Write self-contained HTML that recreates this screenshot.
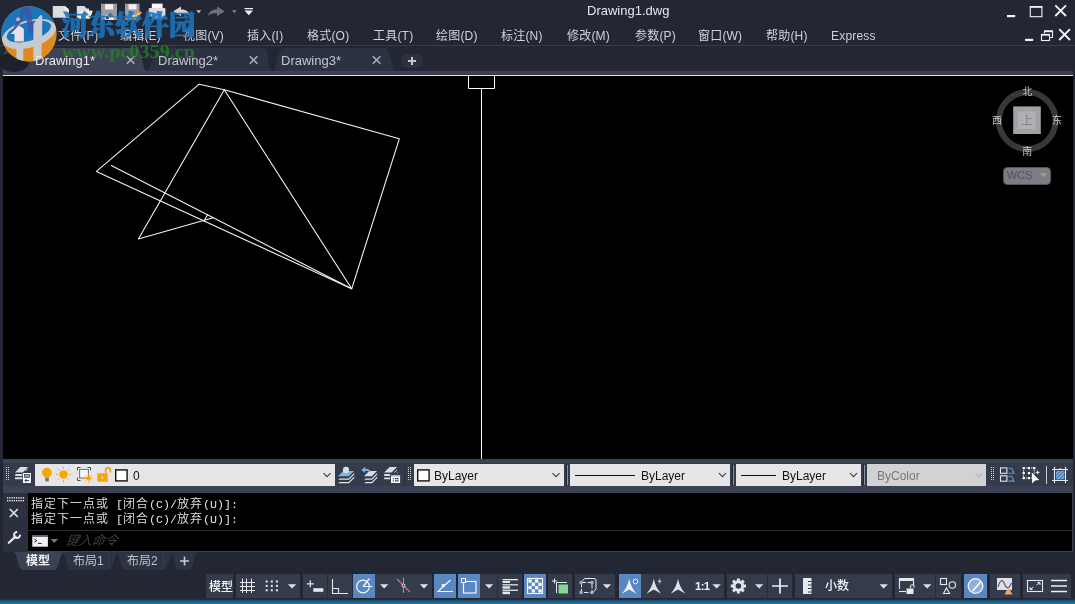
<!DOCTYPE html>
<html lang="zh-CN">
<head>
<meta charset="utf-8">
<title>Drawing1.dwg</title>
<style>
*{box-sizing:border-box;margin:0;padding:0}
html,body{width:1075px;height:604px;overflow:hidden;background:#222733}
body{position:relative;font-family:"Liberation Sans","Noto Sans CJK SC",sans-serif;font-size:12px;color:#d6d8dc}
#root{position:absolute;left:0;top:0;width:1075px;height:604px;will-change:transform}
.abs{position:absolute}
svg{position:absolute;overflow:visible}
/* title */
#title{left:587px;top:3px;font-size:13px;color:#e4e6ea;white-space:nowrap;line-height:16px}
.menu{top:28px;letter-spacing:.2px;font-size:12px;line-height:17px;color:#cfd2d8;white-space:nowrap}
#menusep{left:0;top:45px;width:1075px;height:1px;background:#363d4c}
.ftxt{z-index:5;top:53px;font-size:13px;line-height:16px;color:#c4c7ce;white-space:nowrap}
#bar1{left:3px;top:71px;width:1070px;height:4px;background:#3d4354;border-bottom:1px solid #30343f}
#wline{left:3px;top:75px;width:1070px;height:1px;background:#e4e4ec}
#canvas{left:3px;top:76px;width:1070px;height:383px;background:#000}
#bar2{left:3px;top:459px;width:1070px;height:34px;background:#3a4254}
#tb{left:3px;top:463px;width:1070px;height:23px;background:#343b4b}
.dd{top:464px;height:22px;background:#e6e6e8;color:#111;font-size:12px;line-height:22px;white-space:nowrap}
#cmdl{left:3px;top:493px;width:25px;height:59px;background:#2a303e}
#cmd{left:28px;top:493px;width:1045px;height:59px;background:#000;border-right:1px solid #3a4050;border-bottom:1px solid #3a4050}
#cmdsep{left:28px;top:530px;width:1045px;height:1px;background:#2a2e38}
.cl{left:31px;font-family:"Liberation Mono","Noto Sans CJK SC",monospace;font-size:12px;letter-spacing:1px;line-height:15px;color:#e4e4e4;white-space:pre;font-weight:350}
.cl .a{font-size:11.67px;letter-spacing:0}
.sb{top:574px;height:24px;background:#343b4b}
.sb.on{background:#5b87c0}
#blue{left:0;top:599px;width:1075px;height:5px;background:linear-gradient(#222733 0%,#1b5f88 45%,#1676ad 100%)}
</style>
</head>
<body>
<div id="root">
<!-- SECTION: title -->
<div class="abs" id="title">Drawing1.dwg</div>
<!-- SECTION: menu -->
<div class="abs menu" style="left:58px">文件(F)</div>
<div class="abs menu" style="left:120px">编辑(E)</div>
<div class="abs menu" style="left:183px">视图(V)</div>
<div class="abs menu" style="left:247px">插入(I)</div>
<div class="abs menu" style="left:307px">格式(O)</div>
<div class="abs menu" style="left:373px">工具(T)</div>
<div class="abs menu" style="left:436px">绘图(D)</div>
<div class="abs menu" style="left:501px">标注(N)</div>
<div class="abs menu" style="left:567px">修改(M)</div>
<div class="abs menu" style="left:635px">参数(P)</div>
<div class="abs menu" style="left:698px">窗口(W)</div>
<div class="abs menu" style="left:766px">帮助(H)</div>
<div class="abs menu" style="left:831px">Express</div>
<div class="abs" id="menusep"></div>
<!-- SECTION: filetabs -->
<svg width="1075" height="604" viewBox="0 0 1075 604" style="left:0;top:0">
<path d="M146.5 71 C152.5 71 152 48 159 48 H263 C270 48 267 71 273 71Z" fill="#2c3241"/>
<path d="M272 71 C278 71 277 48 284 48 H384 C391 48 391 71 397 71Z" fill="#2c3241"/>
<path d="M3 71 V58 Q3 48 13 48 H136 C143 48 141.500 71 147.500 71Z" fill="#3d4354"/>
<rect x="401" y="54" width="22" height="14" rx="6" fill="#2c3241"/>
</svg>
<div class="abs ftxt" style="left:35px;color:#e8eaee">Drawing1*</div>
<div class="abs ftxt" style="left:158px">Drawing2*</div>
<div class="abs ftxt" style="left:281px">Drawing3*</div>
<svg width="1075" height="604" viewBox="0 0 1075 604" style="left:0;top:0" fill="none">
<!-- quick access -->
<path d="M52.800 6 H64.700 L69 9.600 V17.700 H52.800Z" fill="#dcdde1"/>
<path d="M64.700 6 V9.600 H69Z" fill="#f4f4f6"/>
<path d="M76.800 18.600 V6 H84.300 L86.500 8.400 H89 V10.700 H92.600 L89.900 18.600Z" fill="#dcdde1"/>
<path d="M80 10.700 H92.600 L89.900 18.600 H76.800Z" fill="#eceef0"/>
<rect x="101" y="3.700" width="16" height="16.300" fill="#9b9ca3"/>
<rect x="105" y="4.200" width="8.200" height="5.200" fill="#f0f0f3"/>
<rect x="104.700" y="15.300" width="9" height="4.700" fill="#f0f0f3"/>
<rect x="106" y="16.600" width="2.600" height="2.600" fill="#2a3142"/>
<rect x="125" y="3.700" width="14.500" height="16.300" fill="#9b9ca3"/>
<rect x="128.500" y="4.200" width="8" height="5.200" fill="#f0f0f3"/>
<rect x="128.500" y="15.300" width="8" height="4.700" fill="#f0f0f3"/>
<path d="M139.800 11 L141.800 13 L134.500 20 L132 20.500 L132.600 18Z" fill="#f2c24e"/>
<path d="M139.800 11 L141.800 13 L140.600 14.200 L138.600 12.200Z" fill="#e87a7a"/>
<rect x="151.800" y="3.600" width="10.800" height="6" fill="#fafafc"/>
<rect x="148.700" y="8" width="16.700" height="8.500" rx="1" fill="#dcdde1"/>
<rect x="151.800" y="13.500" width="10.800" height="5.800" fill="#9fd0f5"/>
<path d="M173.200 11.300 L181 6.400 V9.400 C186 9.200 189 11.500 190 15.800 C187.600 13.600 185 13 181 13.200 V16.200Z" fill="#d4d6dc"/>
<path d="M196.200 10.300 H201.200 L198.700 13.200Z" fill="#c8cad0"/>
<path d="M224.800 11.300 L217 6.400 V9.400 C212 9.200 209 11.500 208 15.800 C210.400 13.600 213 13 217 13.200 V16.200Z" fill="#6b7080"/>
<path d="M231.800 10.300 H236.800 L234.300 13.200Z" fill="#7a7f8c"/>
<path d="M244.600 7.900 H253 V9.200 H244.600Z M244.600 10.500 H253 L248.800 15.200Z" fill="#f0f1f4"/>
<!-- window controls -->
<g fill="#f2f3f6">
<rect x="1007" y="15" width="8.200" height="2.200"/>
<rect x="1025" y="38.800" width="8.200" height="2.200"/>
</g>
<rect x="1030.300" y="7" width="11.600" height="9.700" stroke="#f2f3f6" stroke-width="1.100"/>
<rect x="1029.800" y="6" width="12.600" height="1.600" fill="#f2f3f6"/>
<path d="M1055.300 5.300 L1066 16 M1066 5.300 L1055.300 16" stroke="#f2f3f6" stroke-width="1.900"/>
<path d="M1059.200 29.200 L1070 40 M1070 29.200 L1059.200 40" stroke="#f2f3f6" stroke-width="1.900"/>
<path d="M1044.500 33.500 V31 H1052.500 V37.500 H1050" stroke="#f2f3f6" stroke-width="1.100"/>
<path d="M1044 31.300 H1053" stroke="#f2f3f6" stroke-width="1.700"/>
<rect x="1041.500" y="34.500" width="8" height="6" stroke="#f2f3f6" stroke-width="1.100"/>
<path d="M1041 34.800 H1050" stroke="#f2f3f6" stroke-width="1.700"/>
<!-- tab close / plus -->
<g stroke="#a9adb7" stroke-width="1.600">
<path d="M126.800 56.200 L134.400 63.800 M134.400 56.200 L126.800 63.800"/>
<path d="M249.800 56.200 L257.400 63.800 M257.400 56.200 L249.800 63.800"/>
<path d="M372.800 56.200 L380.400 63.800 M380.400 56.200 L372.800 63.800"/>
<path d="M412 57 V65 M408 61 H416" stroke-width="2" stroke="#c6c8ce"/>
</g>
</svg>
<div class="abs" id="bar1"></div>
<div class="abs" id="wline"></div>
<!-- SECTION: canvas -->
<div class="abs" id="canvas"></div>
<svg width="1075" height="604" viewBox="0 0 1075 604" style="left:0;top:0" fill="none" stroke="#f2f2f2" stroke-width="1.1" stroke-linecap="round" stroke-linejoin="round">
<path d="M199.2 84.2 L224.3 89.8 L399.3 138.8 L351.7 288.8 L96.4 171.4 Z"/>
<path d="M111.3 165.5 L351.7 288.8 L224.3 89.8 L138.4 239 L213.1 217.7"/>
<path d="M204 221 L207.6 214.7"/>
<path d="M468.5 76 V88.5 H494.5 V76" stroke="#fff" stroke-width="1"/>
<path d="M481.5 88.5 V459" stroke="#fff" stroke-width="1" stroke-linecap="butt"/>
</svg>
<!-- viewcube -->
<svg width="1075" height="604" viewBox="0 0 1075 604" style="left:0;top:0">
<circle cx="1027.2" cy="120.6" r="28.3" fill="none" stroke="#38383a" stroke-width="6"/>
<rect x="1013.2" y="106.4" width="27.6" height="27.6" fill="#a2a2a6"/>
<rect x="1018" y="111.5" width="17.5" height="17.5" fill="#b0b0b4"/>
<rect x="1003.5" y="167.5" width="47" height="17" rx="4" fill="#7c7c82" stroke="#55555a" stroke-width="1"/>
<path d="M1040 173 h7 l-3.5 4.5z" fill="#9a9aa0"/>
<g font-family="'Liberation Sans','Noto Sans CJK SC',sans-serif" text-anchor="middle">
<text x="1027.2" y="94.5" font-size="10" fill="#c8c8c8">北</text>
<text x="1027.2" y="154.5" font-size="10" fill="#c8c8c8">南</text>
<text x="997" y="123.7" font-size="10" fill="#c8c8c8">西</text>
<text x="1057" y="123.7" font-size="10" fill="#c8c8c8">东</text>
<text x="1027.2" y="124.8" font-size="12" fill="#66666c" font-weight="300">上</text>
<text x="1019.5" y="178.8" font-size="11" fill="#505056">WCS</text>
</g>
</svg>
<!-- SECTION: toolbar -->
<div class="abs" id="bar2"></div>
<div class="abs" id="tb"></div>
<div class="abs dd" style="left:35px;width:300px"><span class="abs" style="left:98px;top:1px">0</span></div>
<div class="abs dd" style="left:414px;width:150px"><span class="abs" style="left:20px;top:1px">ByLayer</span></div>
<div class="abs dd" style="left:570px;width:160px"><span class="abs" style="left:71px;top:1px">ByLayer</span></div>
<div class="abs dd" style="left:736px;width:125px"><span class="abs" style="left:46px;top:1px">ByLayer</span></div>
<div class="abs dd" style="left:867px;width:119px;background:#d2d2d5;color:#77777a"><span class="abs" style="left:10px;top:1px">ByColor</span></div>
<svg width="1075" height="604" viewBox="0 0 1075 604" style="left:0;top:0" fill="none">
<!-- toolbar decorations -->
<g stroke="#444448" stroke-width="1.150">
<path d="M323.500 473.200 l3.500 3.500 l3.500 -3.500"/><path d="M552.500 473.200 l3.500 3.500 l3.500 -3.500"/><path d="M719 473.200 l3.500 3.500 l3.500 -3.500"/><path d="M850 473.200 l3.500 3.500 l3.500 -3.500"/>
</g>
<path d="M975.500 473.200 l3.500 3.500 l3.500 -3.500" stroke="#b4b4b8" stroke-width="1.150"/>
<g stroke="#111" stroke-width="1">
<path d="M575 475.5 H635"/><path d="M741 475.5 H776"/>
</g>
<rect x="115.7" y="469.9" width="11.4" height="11" fill="#fff" stroke="#111" stroke-width="1.4"/>
<rect x="417.7" y="469.9" width="11.4" height="11" fill="#fff" stroke="#111" stroke-width="1.4"/>
<!-- separators -->
<g stroke="#8b92a3" stroke-width="1">
<path d="M404.5 464 V486" stroke="#2a303e"/>
<path d="M567.5 465 V485"/><path d="M733.5 465 V485"/><path d="M864.5 465 V485"/>
<path d="M1046.5 466 V484" stroke="#c8ccd4"/>
</g>
<g stroke="#222733" stroke-width="1"><path d="M566.5 465 V485"/><path d="M732.5 465 V485"/><path d="M863.5 465 V485"/></g>
</svg>
<!-- toolbar icons -->
<svg width="1075" height="604" viewBox="0 0 1075 604" style="left:0;top:0" fill="none">
<g fill="#cfd3db"><rect x="6" y="467" width="1" height="1"/><rect x="6" y="469" width="1" height="1"/><rect x="6" y="471" width="1" height="1"/><rect x="6" y="473" width="1" height="1"/><rect x="6" y="475" width="1" height="1"/><rect x="6" y="477" width="1" height="1"/><rect x="6" y="479" width="1" height="1"/><rect x="8" y="467" width="1" height="1"/><rect x="8" y="469" width="1" height="1"/><rect x="8" y="471" width="1" height="1"/><rect x="8" y="473" width="1" height="1"/><rect x="8" y="475" width="1" height="1"/><rect x="8" y="477" width="1" height="1"/><rect x="8" y="479" width="1" height="1"/><rect x="408" y="467" width="1" height="1"/><rect x="408" y="469" width="1" height="1"/><rect x="408" y="471" width="1" height="1"/><rect x="408" y="473" width="1" height="1"/><rect x="408" y="475" width="1" height="1"/><rect x="408" y="477" width="1" height="1"/><rect x="408" y="479" width="1" height="1"/><rect x="410" y="467" width="1" height="1"/><rect x="410" y="469" width="1" height="1"/><rect x="410" y="471" width="1" height="1"/><rect x="410" y="473" width="1" height="1"/><rect x="410" y="475" width="1" height="1"/><rect x="410" y="477" width="1" height="1"/><rect x="410" y="479" width="1" height="1"/><rect x="991" y="467" width="1" height="1"/><rect x="991" y="469" width="1" height="1"/><rect x="991" y="471" width="1" height="1"/><rect x="991" y="473" width="1" height="1"/><rect x="991" y="475" width="1" height="1"/><rect x="991" y="477" width="1" height="1"/><rect x="991" y="479" width="1" height="1"/><rect x="993" y="467" width="1" height="1"/><rect x="993" y="469" width="1" height="1"/><rect x="993" y="471" width="1" height="1"/><rect x="993" y="473" width="1" height="1"/><rect x="993" y="475" width="1" height="1"/><rect x="993" y="477" width="1" height="1"/><rect x="993" y="479" width="1" height="1"/></g>
<!-- layer props icon -->
<g fill="#dcdde2">
<path d="M15 472.6 L20.2 467.1 H28 L22.8 472.6Z"/>
<path d="M15.3 474 H22.3 V476 H15.3Z M15 477.3 H22.3 V479.3 H15Z"/>
<path d="M25.5 470.8 l2.2-2.2" stroke="#dcdde2" stroke-width="1"/>
</g>
<rect x="22.9" y="473" width="8" height="10" fill="#fff"/>
<rect x="24.3" y="474.4" width="5.3" height="3" fill="#7fa3cf" stroke="#2f3b50" stroke-width=".7"/>
<path d="M25 480.6 H29 M26.6 479 L25 480.6 L26.6 482.2" stroke="#2f3b50" stroke-width="1"/>
<!-- bulb -->
<circle cx="46.9" cy="472.6" r="4.9" fill="#f5a700"/>
<rect x="45.2" y="477.3" width="3.6" height="4.2" rx="1" fill="#77777c"/>
<path d="M44 476 h5.8 l-1 2 h-3.8z" fill="#f5a700"/>
<!-- sun -->
<circle cx="63.5" cy="474.5" r="4.2" fill="#f5a700"/>
<g stroke="#f0a81a" stroke-width="1">
<path d="M63.5 466.8 v2 M63.5 480.2 v2 M55.8 474.5 h2 M69.2 474.5 h2 M58.1 469.1 l1.4 1.4 M67.5 478.5 l1.4 1.4 M68.9 469.1 l-1.4 1.4 M59.5 478.5 l-1.4 1.4"/>
</g>
<!-- frame/viewport freeze -->
<rect x="79.6" y="469.4" width="8.8" height="8.6" fill="#f6f6fa" stroke="#6a6d78" stroke-width="1"/>
<path d="M77.5 470.5 V467.5 H80.5 M87.5 467.5 H90.5 V470.5 M77.5 477.5 V480.5 H80.5" stroke="#4a4d58" stroke-width="1"/>
<circle cx="88.6" cy="478.3" r="2.4" fill="#f5a700"/>
<g stroke="#f0a81a" stroke-width=".9"><path d="M88.6 473.8 v1.2 M88.6 481.6 v1.2 M84.1 478.3 h1.2 M91.9 478.3 h1.2 M85.4 475.1 l.9 .9 M90.9 480.6 l.9 .9 M91.8 475.1 l-.9 .9 M86.3 480.6 l-.9 .9"/></g>
<!-- lock -->
<rect x="97.3" y="473.3" width="10.4" height="8.4" fill="#f5a700"/>
<path d="M105.6 473.3 V470.5 a2.4 2.6 0 0 1 4.8 0 V472.4" stroke="#e9a21a" stroke-width="1.6"/>
<rect x="101.9" y="476" width="1" height="3" fill="#ffe9a8"/>
<!-- layer icons after dd1 -->
<path d="M338 476.2 L343.2 471 H354 L348.8 476.2Z" fill="#7db5e4"/>
<circle cx="346" cy="469.9" r="3.1" fill="#dcdde2"/>
<path d="M338.3 479.8 H349 L354.3 474.5 V473 L348.6 478.5 H339.6Z M338.3 483.2 H349 L354.3 477.9 V476.4 L348.6 481.9 H339.6Z" fill="#e4e5ea"/>
<path d="M364 476.2 L369.2 471 H377 L371.8 476.2Z" fill="#dcdde2"/>
<path d="M364.3 479.8 H372 L377.3 474.5 V473 L371.6 478.5 H365.6Z M364.3 483.2 H372 L377.3 477.9 V476.4 L371.6 481.9 H365.6Z" fill="#e4e5ea"/>
<path d="M361.3 469.9 L365.2 466.8 V468.8 C368 468.6 370 469.6 371 472 C369.6 470.9 367.6 470.8 365.2 471 V473Z" fill="#6fb0e6"/>
<path d="M384.1 472.5 L389.7 466.9 H397.1 L391.5 472.5Z" fill="#dcdde2"/>
<path d="M384.2 474 H390.2 V476 H384.2Z M384.2 477.4 H390.2 V479.3 H384.2Z" fill="#dcdde2"/>
<path d="M394.3 472.6 l2.6-2.6 M397.2 473.2 l.6-.6" stroke="#dcdde2" stroke-width="1"/>
<rect x="391" y="475" width="9.1" height="8" fill="#fff"/>
<rect x="391" y="475" width="9.1" height="1.7" fill="#b4b5bd"/>
<path d="M392.8 478.6 h1.2 M395 478.6 h3.6 M392.8 480.9 h1.2 M395 480.9 h3.6" stroke="#3a4254" stroke-width="1.1"/>
<!-- right icons -->
<g stroke="#e4e6ec" stroke-width="1.1">
<rect x="1000.5" y="467.9" width="6.4" height="5.4"/><rect x="1000.5" y="475.8" width="6.4" height="5.4"/>
</g>
<path d="M1008.5 468.3 H1011.6 L1014 473.2 H1008.5 M1008.5 476.2 H1011.6 L1014 481.1 H1008.5" stroke="#5b9bd5" stroke-width="1.1"/>
<rect x="1023.6" y="468" width="10.6" height="10" stroke="#e8eaee" stroke-width="1" stroke-dasharray="1.5 1"/>
<g fill="#fff"><rect x="1022.6" y="467" width="2.2" height="2.2"/><rect x="1027.9" y="467" width="2.2" height="2.2"/><rect x="1033.2" y="467" width="2.2" height="2.2"/><rect x="1022.6" y="472" width="2.2" height="2.2"/><rect x="1027.9" y="472" width="2.2" height="2.2"/><rect x="1022.6" y="477" width="2.2" height="2.2"/><rect x="1027.9" y="477" width="2.2" height="2.2"/>
<path d="M1031.8 472.6 L1039.2 480 L1035 480.6 L1032.2 483.4Z"/>
<path d="M1037.6 470.6 v3.6 M1035.8 472.4 h3.6" stroke="#fff" stroke-width="1"/></g>
<path d="M1054.5 466.8 V483.2 M1065.5 466.8 V483.2 M1052 469.5 H1068 M1052 480.5 H1068" stroke="#e4e6ec" stroke-width="1.1"/>
<rect x="1056" y="470.8" width="8.4" height="8.6" fill="#4f86c0"/>
<path d="M1056 474 l3.2-3.2 M1056 477.6 l6.8-6.8 M1057.6 479.4 l6.8-6.8 M1061.2 479.4 l3.2-3.2" stroke="#a8cdf0" stroke-width=".9"/>
<path d="M1057.6 469.6 q2.6-2 5.2 0z" fill="#fff"/>
</svg>
<!-- SECTION: cmd -->
<div class="abs" id="cmdl"></div>
<div class="abs" id="cmd"></div>
<div class="abs" id="cmdsep"></div>
<div class="abs cl" style="top:498px">指定下一点或<span class="a"> [</span>闭合<span class="a">(C)/</span>放弃<span class="a">(U)]:</span></div>
<div class="abs cl" style="top:513px">指定下一点或<span class="a"> [</span>闭合<span class="a">(C)/</span>放弃<span class="a">(U)]:</span></div>
<div class="abs" style="left:66px;top:532px;font-size:13px;line-height:17px;color:#3e3e40;font-style:italic;white-space:nowrap;transform:skewX(-10deg)">键入命令</div>
<svg width="1075" height="604" viewBox="0 0 1075 604" style="left:0;top:0" fill="none">
<g fill="#eceef2"><rect x="7.00" y="497.2" width="1.300" height="1.400"/><rect x="9.25" y="497.2" width="1.300" height="1.400"/><rect x="11.50" y="497.2" width="1.300" height="1.400"/><rect x="13.75" y="497.2" width="1.300" height="1.400"/><rect x="16.00" y="497.2" width="1.300" height="1.400"/><rect x="18.25" y="497.2" width="1.300" height="1.400"/><rect x="20.50" y="497.2" width="1.300" height="1.400"/><rect x="22.75" y="497.2" width="1.300" height="1.400"/><rect x="7.00" y="500" width="1.300" height="1.400"/><rect x="9.25" y="500" width="1.300" height="1.400"/><rect x="11.50" y="500" width="1.300" height="1.400"/><rect x="13.75" y="500" width="1.300" height="1.400"/><rect x="16.00" y="500" width="1.300" height="1.400"/><rect x="18.25" y="500" width="1.300" height="1.400"/><rect x="20.50" y="500" width="1.300" height="1.400"/><rect x="22.75" y="500" width="1.300" height="1.400"/></g>
<path d="M9.8 509 L17.8 517 M17.8 509 L9.8 517" stroke="#e2e4ea" stroke-width="1.7"/>
<path d="M8.8 542.8 L15.4 536.6" stroke="#e8eaee" stroke-width="2.2" stroke-linecap="round"/>
<path d="M20 534.7 A3 3 0 1 1 17.3 532" stroke="#e8eaee" stroke-width="2" fill="none"/>
<rect x="32.3" y="535.2" width="15.6" height="11.5" fill="#f2f2f4"/>
<rect x="32.3" y="535.2" width="15.6" height="1.6" fill="#4a4a4e"/>
<path d="M34.4 539 l2.4 1.6 l-2.4 1.6 M38 543.4 h3.6" stroke="#222" stroke-width="1"/>
<path d="M50.6 539 h7.4 l-3.7 4z" fill="#77777a"/>
</svg>
<!-- SECTION: layouttabs -->
<svg width="1075" height="604" viewBox="0 0 1075 604" style="left:0;top:0">
<path d="M62 552 C66 552 66 570 71 570 H109 C114 570 114 552 119 552Z" fill="#2d3342"/>
<path d="M116 552 C120 552 120 570 125 570 H164 C169 570 169 552 174 552Z" fill="#2d3342"/>
<path d="M170 552 C174 552 174 570 179 570 H189 C194 570 194 552 198 552Z" fill="#2d3342"/>
<path d="M13 552 C18 552 17 570 23 570 H54 C60 570 59 552 64.500 552Z" fill="#3a4254"/>
<path d="M108.5 553 V567 M163.500 553 V567" stroke="#39404f" stroke-width="1"/>
<path d="M184.500 556.500 V565.500 M180 561 H189" stroke="#c6c9d0" stroke-width="1.6"/>
</svg>
<div class="abs" style="left:26px;top:553px;font-size:12px;line-height:17px;font-weight:bold;color:#f2f3f6;white-space:nowrap">模型</div>
<div class="abs" style="left:73px;top:553px;font-size:12px;line-height:17px;color:#bfc3cb;white-space:nowrap">布局1</div>
<div class="abs" style="left:127px;top:553px;font-size:12px;line-height:17px;color:#bfc3cb;white-space:nowrap">布局2</div>
<!-- SECTION: status -->
<div class="abs sb" style="left:206px;width:27px"></div>
<div class="abs sb" style="left:236px;width:64px"></div>
<div class="abs sb" style="left:303px;width:49px"></div>
<div class="abs sb on" style="left:353px;width:22px"></div>
<div class="abs sb" style="left:375px;width:57px"></div>
<div class="abs sb on" style="left:434px;width:22px"></div>
<div class="abs sb on" style="left:458px;width:22px"></div>
<div class="abs sb" style="left:480px;width:42px"></div>
<div class="abs sb on" style="left:524px;width:22px"></div>
<div class="abs sb" style="left:548px;width:24px"></div>
<div class="abs sb" style="left:575px;width:40px"></div>
<div class="abs sb on" style="left:619px;width:22px"></div>
<div class="abs sb" style="left:641px;width:83px"></div>
<div class="abs sb" style="left:727px;width:65px"></div>
<div class="abs sb" style="left:795px;width:97px"></div>
<div class="abs sb" style="left:895px;width:66px"></div>
<div class="abs sb on" style="left:964px;width:23px"></div>
<div class="abs sb" style="left:990px;width:30px"></div>
<div class="abs sb" style="left:1023px;width:48px"></div>
<div class="abs" style="left:209px;top:579px;font-size:12px;line-height:17px;color:#f4f5f8;white-space:nowrap;font-weight:500">模型</div>
<div class="abs" style="left:825px;top:578px;font-size:12px;line-height:17px;color:#f4f5f8;white-space:nowrap;font-weight:500">小数</div>
<div class="abs" style="left:695px;top:578px;line-height:17px;color:#eceef2;white-space:nowrap;letter-spacing:-.7px;font-weight:bold;font-size:11.5px">1:1</div>
<svg width="1075" height="604" viewBox="0 0 1075 604" style="left:0;top:0" fill="none">
<g fill="#dfe1e6"><path d="M287.9 584.2 h8.4 l-4.2 4.2z"/><path d="M380 584.2 h8.4 l-4.2 4.2z"/><path d="M419.8 584.2 h8.4 l-4.2 4.2z"/><path d="M484.9 584.2 h8.4 l-4.2 4.2z"/><path d="M602.8 584.2 h8.4 l-4.2 4.2z"/><path d="M712.4 584.2 h8.4 l-4.2 4.2z"/><path d="M755 584.2 h8.4 l-4.2 4.2z"/><path d="M879.5 584.2 h8.4 l-4.2 4.2z"/><path d="M923 584.2 h8.4 l-4.2 4.2z"/></g>
<!-- separators inside groups -->
<path d="M327.500 574 V598 M497.500 574 V598 M767.500 574 V598 M935.500 574 V598" stroke="#262b37" stroke-width="1"/>
<!-- grid -->
<path d="M242.500 578.500 V593 M246.500 578.500 V593 M251.500 578.500 V593 M240 582.500 H255 M240 586.500 H255 M240 590.500 H255" stroke="#e6e8ec" stroke-width="1"/>
<!-- snap dots -->
<g fill="#e6e8ec"><rect x="265.7" y="580.5" width="2" height="2"/><rect x="265.7" y="584.9" width="2" height="2"/><rect x="265.7" y="589.3" width="2" height="2"/><rect x="270.8" y="580.5" width="2" height="2"/><rect x="270.8" y="584.9" width="2" height="2"/><rect x="270.8" y="589.3" width="2" height="2"/><rect x="275.9" y="580.5" width="2" height="2"/><rect x="275.9" y="584.9" width="2" height="2"/><rect x="275.9" y="589.3" width="2" height="2"/></g>
<!-- dyn input -->
<path d="M310.300 580.300 V587.300 M306.800 583.800 H313.800" stroke="#e6e8ec" stroke-width="1.2"/>
<rect x="313.300" y="588.200" width="10" height="3.600" fill="#e6e8ec"/>
<!-- ortho -->
<path d="M332.500 579 V593.500 H348 M332.500 588.500 H338.500 V593.500" stroke="#e6e8ec" stroke-width="1.1"/>
<!-- polar -->
<circle cx="363" cy="586.500" r="6.300" stroke="#f4f6fa" stroke-width="1.200"/>
<path d="M363 586.500 H372.500 M363 586.500 L369.500 578.500" stroke="#f4f6fa" stroke-width="1.200"/>
<!-- isodraft -->
<path d="M403.500 577.500 V593" stroke="#5fb878" stroke-width="1.100"/>
<path d="M397 579 L410 592" stroke="#e0707c" stroke-width="1.100"/>
<circle cx="403.500" cy="585.500" r="1.500" stroke="#f0f0f0" stroke-width="1" fill="#343b4b"/>
<!-- otrack -->
<path d="M437 591.500 H453 M438.500 591 L450.500 580" stroke="#f4f6fa" stroke-width="1.200"/>
<rect x="441.800" y="584" width="3" height="3" fill="#f4f6fa"/>
<!-- osnap -->
<rect x="463.500" y="581.500" width="12.500" height="11.500" stroke="#f4f6fa" stroke-width="1.200"/>
<rect x="461.500" y="578.500" width="4" height="4" fill="#5b87c0" stroke="#f4f6fa" stroke-width="1"/>
<!-- lineweight -->
<g fill="#e6e8ec"><rect x="502.500" y="579" width="15.500" height="1.300"/><rect x="502.500" y="581" width="7.500" height="2"/><rect x="502.500" y="584.200" width="15.500" height="1.300"/><rect x="502.500" y="586.300" width="7.500" height="2.400"/><rect x="502.500" y="589.600" width="15.500" height="1.300"/><rect x="502.500" y="591.600" width="7.500" height="2.600"/></g>
<!-- transparency -->
<rect x="527.500" y="578.500" width="15" height="15" fill="#5b87c0" stroke="#f4f6fa" stroke-width="1.100"/>
<g fill="#f4f6fa"><rect x="528.4" y="579.4" width="3.3" height="3.3"/><rect x="528.4" y="586" width="3.3" height="3.3"/><rect x="531.7" y="582.7" width="3.3" height="3.3"/><rect x="531.7" y="589.3" width="3.3" height="3.3"/><rect x="535" y="579.4" width="3.3" height="3.3"/><rect x="535" y="586" width="3.3" height="3.3"/><rect x="538.3" y="582.7" width="3.3" height="3.3"/><rect x="538.3" y="589.3" width="3.3" height="3.3"/></g>
<!-- sel cycling -->
<path d="M554.500 578.500 V583.500 M552 581 H557" stroke="#e6e8ec" stroke-width="1"/>
<path d="M556.500 593 V582.500 H567" stroke="#e6e8ec" stroke-width="1"/>
<rect x="558.500" y="584.500" width="9.500" height="9" fill="#86d69a"/>
<!-- 3d osnap -->
<path d="M581 582.500 L584.500 578.500 H594 Q596 578.500 596 580.500 V589 L592.500 593" stroke="#e6e8ec" stroke-width="1"/>
<rect x="581.500" y="582.500" width="10.500" height="10" stroke="#e6e8ec" stroke-width="1" stroke-dasharray="4.500 1.500"/>
<g fill="#7db5e4"><rect x="579.500" y="581" width="3" height="3"/><rect x="590.500" y="581" width="3" height="3"/><rect x="579.500" y="591" width="3" height="3"/><rect x="590.500" y="591" width="3" height="3"/></g>
<!-- annotation icons -->
<g fill="#f0f1f5">
<path d="M629.2 578.800 Q630.8000000000001 587.500 636.5 593.800 L629.2 589.500 L621.9000000000001 593.800 Q627.6 587.500 629.2 578.800Z"/>
<path d="M653.8 578.800 Q655.4 587.500 661.0999999999999 593.800 L653.8 589.500 L646.5 593.800 Q652.1999999999999 587.500 653.8 578.800Z" fill="#e0e2e7"/>
<path d="M678 578.800 Q679.6 587.500 685.3 593.800 L678 589.500 L670.7 593.800 Q676.4 587.500 678 578.800Z" fill="#e0e2e7"/>
<path d="M660.500 577.500 L657.500 582 H659.500 L658 585.500 L662 580.500 H659.800Z" fill="#e0e2e7" stroke="#343b4b" stroke-width=".4"/>
</g>
<circle cx="635.500" cy="581.500" r="2.300" stroke="#f4f6fa" stroke-width="1"/>
<!-- gear -->
<g transform="translate(738.400 586)">
<circle r="4.300" stroke="#e2e4e9" stroke-width="3"/>
<g stroke="#e2e4e9" stroke-width="3"><path d="M0 -7.600 V-5 M0 7.600 V5 M-7.600 0 H-5 M7.600 0 H5 M-5.400 -5.400 L-3.600 -3.600 M5.400 5.400 L3.600 3.600 M5.400 -5.400 L3.600 -3.600 M-5.400 5.400 L-3.600 3.600"/></g>
</g>
<!-- plus -->
<path d="M780 578.500 V593.500 M772 586 H788" stroke="#eceef2" stroke-width="1.700"/>
<!-- ruler -->
<rect x="803" y="578" width="8.500" height="16" fill="#e6e8ec"/>
<path d="M808 581.500 H811.500 M808 585 H811.500 M808 588.500 H811.500 M808 592 H811.500" stroke="#343b4b" stroke-width="1.200"/>
<!-- ws lock -->
<path d="M899.500 589 V578.500 H913.500 V586" stroke="#e6e8ec" stroke-width="1.100"/>
<path d="M899 580 H914" stroke="#e6e8ec" stroke-width="2"/>
<path d="M899 591.500 H906" stroke="#e6e8ec" stroke-width="1.100"/>
<rect x="906.500" y="588.500" width="7" height="5.500" fill="#e6e8ec"/>
<path d="M910.500 588.500 V586.500 a1.800 1.800 0 0 1 3.600 0 V587.500" stroke="#e6e8ec" stroke-width="1.100"/>
<!-- shapes -->
<rect x="940.500" y="578.500" width="6" height="6" stroke="#e6e8ec" stroke-width="1.100"/>
<circle cx="952.300" cy="585" r="3.200" stroke="#e6e8ec" stroke-width="1.100"/>
<path d="M943.500 593.500 L946.500 588 L949.500 593.500Z" stroke="#e6e8ec" stroke-width="1.100"/>
<!-- hw accel -->
<circle cx="975.500" cy="586" r="7.300" fill="#8fb0dc" stroke="#f6f8fb" stroke-width="1.300"/>
<path d="M973 590.500 L980 582.500" stroke="#f6f8fb" stroke-width="1.800" stroke-linecap="round"/>
<!-- graph -->
<rect x="997" y="578" width="15" height="12" fill="#dfe1e6"/>
<path d="M998 587 Q1001.500 576 1004.500 584 T1011.500 583" stroke="#4a5568" stroke-width="1.100"/>
<path d="M1004.500 594.500 L1008.500 587 L1012.500 594.500Z" fill="#f0a868"/>
<!-- fullscreen -->
<rect x="1027.500" y="580.500" width="15" height="11" stroke="#e6e8ec" stroke-width="1.100"/>
<path d="M1036.500 585 L1040 582.500 M1037.500 582.500 H1040 V585 M1033.500 587 L1030 589.500 M1030 587 V589.500 H1032.500" stroke="#e6e8ec" stroke-width="1"/>
<!-- hamburger -->
<path d="M1051 580.500 H1067 M1051 586 H1067 M1051 591.500 H1067" stroke="#eceef2" stroke-width="1.600"/>
</svg>
<div class="abs" id="blue"></div>
<!-- SECTION: watermark -->
<svg width="1075" height="604" viewBox="0 0 1075 604" style="left:0;top:0">
<defs><clipPath id="lc"><circle cx="29" cy="34" r="27.700"/></clipPath></defs>
<ellipse cx="14" cy="62" rx="15" ry="10" fill="#1d212c"/>
<g clip-path="url(#lc)">
<rect x="0" y="0" width="60" height="70" fill="#e0891f"/>
<path d="M0 0 H60 V24 L0 42Z" fill="#1b75bb"/>
<g transform="rotate(-16 29 34)">
<ellipse cx="29" cy="34" rx="28" ry="13.500" fill="#c9cace"/>
<ellipse cx="29.500" cy="31.500" rx="23" ry="9.300" fill="#1b75bb"/>
</g>
<path d="M23.300 6.900 L30.200 7.600 L34.600 33.400 L29.600 33.400 L25.200 13 L16.400 31.500 H12Z" fill="#3c55a5" opacity=".85"/>
<path d="M33.400 24 L40.300 15.100 L42.200 15.800 V42 H33.400Z" fill="#c9cace"/>
<path d="M10.700 34 L18.900 25.200 L23.900 29 V41.500 H14.500 V34Z" fill="#e9dfe4"/>
<path d="M16.400 46 H23.300 V62 H16.400Z M33.400 44 H41.600 V62 H33.400Z" fill="#c9cace"/>
<path d="M18 16.400 l.8 1.800 l2 .2 l-1.500 1.300 l.5 2 l-1.800-1.100 l-1.800 1.100 l.5-2 l-1.500-1.300 l2-.2z" fill="#e8b4d0"/>
</g>
<text x="61.500" y="34.600" font-family="'Noto Serif CJK SC','Noto Sans CJK SC',serif" font-weight="900" font-size="27.500" fill="#1c73ba" stroke="#1c73ba" stroke-width=".9" stroke-linejoin="round" opacity=".9" textLength="134" lengthAdjust="spacingAndGlyphs">河东软件园</text>
<text x="61.500" y="58.200" font-family="'Liberation Serif',serif" font-weight="bold" font-size="18.500" fill="#238026" opacity=".82" textLength="133.500" lengthAdjust="spacingAndGlyphs">www.pc0359.cn</text>
</svg>
</div>
</body>
</html>
